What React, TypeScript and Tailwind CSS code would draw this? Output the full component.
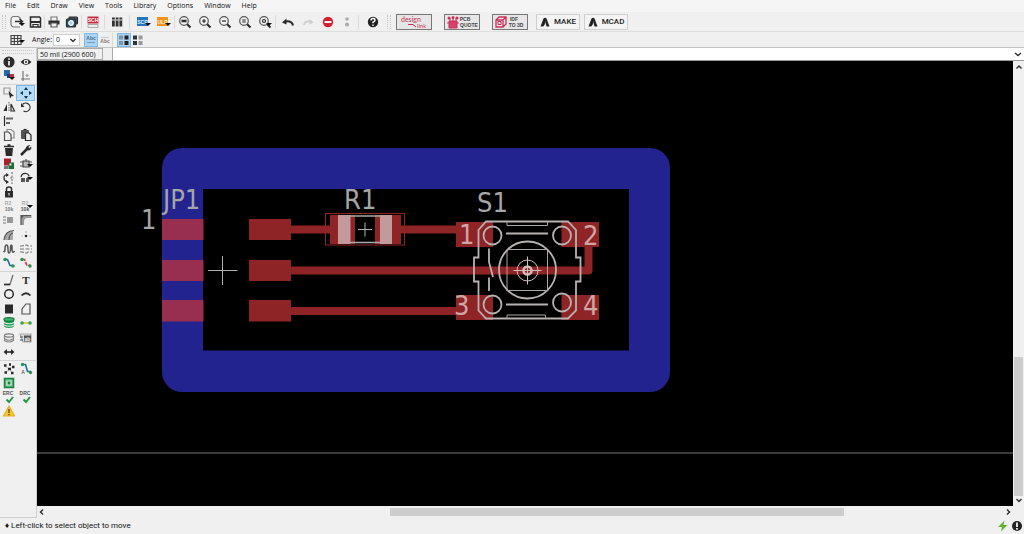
import React from 'react';

type IconProps = { children: React.ReactNode; wide?: boolean };

const DARK = '#2b2b2b';

const Icon = ({ children, wide }: IconProps) => (
    <svg
        viewBox={wide ? '0 0 18 14' : '0 0 14 14'}
        className={wide ? 'w-[18px] h-3.5 shrink-0' : 'size-3.5 shrink-0'}
        fill="none"
        stroke={DARK}
        strokeWidth="1.2"
        aria-hidden="true"
    >
        {children}
    </svg>
);

const Tiny = ({ x, y, fill, size = 5, children }: { x: number; y: number; fill: string; size?: number; children: string }) => (
    <text x={x} y={y} fontSize={size} fontWeight="700" fill={fill} stroke="none" fontFamily="Liberation Sans, sans-serif" textAnchor="middle">
        {children}
    </text>
);

const Caret = ({ x = 12, y = 8 }: { x?: number; y?: number }) => (
    <path d={`M${x - 3} ${y}h6l-3 3z`} fill="#111" stroke="none" />
);

const Lens = ({ children }: { children?: React.ReactNode }) => (
    <Icon>
        <circle cx="6" cy="6" r="4.3" stroke="#555" />
        <path d="M9.2 9.2l3.3 3.3" strokeWidth="2" />
        {children}
    </Icon>
);

/* ---- top toolbar ---- */
const fileTools = [
    { name: 'Open', icon: <Icon wide><path d="M12 4V2.5L10 1.5H5Q3 2 3 4.500v5q.5 2.500 3 2.500h6" stroke="#777" /><path d="M7 6.500h7m-2.500-2.500l3 2.500-3 2.500" strokeWidth="1.500" /><Caret x={14} y={8} /></Icon> },
    { name: 'Save', icon: <Icon><path d="M2.500 2h9l1 1V12h-10z" strokeWidth="1.500" /><path d="M3 7h9" strokeWidth="2" /><path d="M5 12V9.500h5V12" /></Icon> },
];
const printTools = [
    { name: 'Print', icon: <Icon><path d="M4 5.500V2h6v3.500" stroke="#777" /><path d="M1.500 5.500h11v4h-11z" fill={DARK} stroke="none" /><path d="M4 8h6v4H4z" fill="#eee" stroke="#555" /></Icon> },
    { name: 'CAM Processor', icon: <Icon><rect x="4" y="2" width="8.500" height="7" rx="1" fill="#456" /><rect x="1.500" y="4" width="9" height="8" rx="1" fill="#26536e" /><circle cx="6" cy="8" r="2.300" fill="#9fd0ea" stroke="#fff" /></Icon> },
];
const zoomTools = [
    { name: 'Zoom to fit', icon: <Lens><path d="M3.500 6h5" strokeWidth="2.500" /></Lens> },
    { name: 'Zoom in', icon: <Lens><path d="M4 6h4M6 4v4" /></Lens> },
    { name: 'Zoom out', icon: <Lens><path d="M4 6h4" /></Lens> },
    { name: 'Redraw', icon: <Lens><path d="M4.200 5h3.600M4.200 7h3.600" /></Lens> },
    { name: 'Zoom select', icon: <Lens><circle cx="6" cy="6" r="1.500" /><Caret x={11} y={8} /></Lens> },
];
const editTools = [
    { name: 'Undo', icon: <Icon><path d="M12 10.500Q11 5.500 4 6.500" strokeWidth="2" /><path d="M1 7.500l4.500-4v6z" fill={DARK} stroke="none" /></Icon> },
    { name: 'Redo', icon: <Icon><path d="M3 10q1-4.500 6-3.500" stroke="#ccc" strokeWidth="1.600" /><path d="M12.500 7.500L8.500 4v5.500z" fill="#ccc" stroke="none" /></Icon> },
    { name: 'Stop', icon: <Icon><circle cx="7" cy="7" r="5.200" fill="#d3202f" stroke="none" /><path d="M3.500 7h7" stroke="#fff" strokeWidth="2" /></Icon> },
    { name: 'Go', icon: <Icon><circle cx="6" cy="4" r="1.800" fill="#aaa" stroke="none" /><circle cx="6" cy="9.500" r="2" fill="#aaa" stroke="none" /></Icon> },
];

/* ---- left tool palette ---- */
const viewPalette = [
    { name: 'Info', icon: <Icon><circle cx="7" cy="7" r="5" fill={DARK} /><path d="M7 6v4.500M7 3.200v1.600" stroke="#fff" strokeWidth="1.600" /></Icon> },
    { name: 'Show', icon: <Icon><path d="M1.500 7Q7 1 12.500 7 7 13 1.500 7z" fill={DARK} stroke="none" /><circle cx="7" cy="7" r="2.300" fill="#eee" stroke="none" /><circle cx="7" cy="7" r="1" fill={DARK} stroke="none" /></Icon> },
    { name: 'Layers', icon: <Icon><path d="M2 1h6v6H2z" fill="#2c69a8" stroke="none" /><path d="M7 5h5v4H7z" fill="#c52d3c" stroke="none" /><path d="M5 5h3v4H5z" fill="#17406e" stroke="none" /><Caret x={10} y={8} /></Icon> },
    { name: 'Mark', icon: <Icon><path d="M4 2v10M2 10h9" stroke="#777" /><path d="M8 5v3M6.500 6.500h3" stroke="#999" /></Icon> },
];
const editPalette = [
    { name: 'Group', icon: <Icon><path d="M2 2h6v6H2z" stroke="#999" /><path d="M6.500 5l5.500 5-2.500.3L8 12.500z" fill={DARK} stroke="none" /></Icon> },
    { name: 'Move', active: true, icon: <Icon><path d="M7 1l2 3H5zM7 13l2-3H5zM1 7l3-2v4zM13 7l-3-2v4z" fill="#16344f" stroke="none" /></Icon> },
    { name: 'Mirror', icon: <Icon><path d="M1.500 11L5 4v7z" fill={DARK} stroke="none" /><path d="M12.500 11L9 4v7z" /><path d="M7 2v10" strokeDasharray="1.500 1" stroke="#777" /></Icon> },
    { name: 'Rotate', icon: <Icon><path d="M3.500 4.500a4.300 4.300 0 1 1 1 6.500" /><path d="M2 3v4h3.500z" fill={DARK} stroke="none" /></Icon> },
    { name: 'Align', icon: <Icon><path d="M2.500 2v10" /><path d="M4 4.500h7M4 9h4" strokeWidth="2" stroke="#666" /></Icon> },
    null,
    { name: 'Copy', icon: <Icon><path d="M5 1.500h4L12 4v6H5z" stroke="#888" /><path d="M2.500 4h4L9 6.500v6H2.500z" fill="#f0f0f0" stroke="#555" /></Icon> },
    { name: 'Paste', icon: <Icon><rect x="2" y="2" width="8" height="9" rx="1" fill="#555" stroke="none" /><path d="M4.500 1.500h3" /><path d="M6.500 5H10l2 2v5.500H6.500z" fill="#eee" /></Icon> },
    { name: 'Delete', icon: <Icon><path d="M3 5h8l-.8 8H3.800z" fill={DARK} stroke="none" /><path d="M2 3.500h10M5.500 2h3" strokeWidth="1.500" /></Icon> },
    { name: 'Change', icon: <Icon><path d="M2 12l6-6" strokeWidth="2.500" /><path d="M11.500 2L9.500 4l.7 1.200 2-1.700Q13 7 9.500 7.500 6 7.500 7 4.500 8 2 11.500 2z" fill={DARK} stroke="none" /></Icon> },
    { name: 'Paint layers', icon: <Icon><path d="M2 1.500h7v7H2z" fill="#a9202c" stroke="none" /><path d="M6.500 5.500H12V12H6.500z" fill="#1d6b38" stroke="none" /><path d="M7.500 6.500h2v2h-2z" fill="#eee" stroke="none" /><path d="M2 9h4v3H2z" fill="#777" stroke="none" /></Icon> },
    { name: 'Add', icon: <Icon><path d="M4 4h6v6H4z" fill="#bbb" stroke="#444" /><path d="M1 5h3M1 9h3M10 5h3M7 2v3" stroke="#555" /><Caret x={11} y={7} /></Icon> },
    { name: 'Pin swap', icon: <Icon><path d="M6 4H4Q2 4 2 7t3 4" /><path d="M4 2l3 2-3 2zM4 9l3 2-3 2z" fill={DARK} stroke="none" /><path d="M10 1v12M8 7h4" strokeDasharray="2 1.500" stroke="#777" /></Icon> },
    { name: 'Replace', icon: <Icon><path d="M2 6Q3 2 7 2.500q3 .5 3 3" /><path d="M2 7h4v4H2zM7 7h3v4H7z" fill="#555" stroke="none" /><Caret x={11} y={6} /></Icon> },
    { name: 'Lock', icon: <Icon><path d="M4.500 6V4q0-2 2.500-2t2.500 2v2" strokeWidth="1.500" /><path d="M3 6h8v6.500H3z" fill={DARK} stroke="none" /><path d="M7 8v2.500" stroke="#ddd" /></Icon> },
    null,
    { name: 'Name', icon: <Icon><Tiny x={6} y={6} fill="#aaa">R2</Tiny><Tiny x={7} y={12} fill="#777">10k</Tiny></Icon> },
    { name: 'Value', icon: <Icon><Tiny x={6} y={6} fill="#aaa">R2</Tiny><Tiny x={6} y={12} fill="#555">10k</Tiny><Caret x={11} y={6} /></Icon> },
    { name: 'Smash', icon: <Icon><path d="M5 4h6v6H5z" fill="#999" stroke="none" /><path d="M1 4h3M1 7h3M1 10h3" stroke="#777" /></Icon> },
    { name: 'Miter', icon: <Icon><path d="M3.500 12V8.500q0-5 5-5h4" stroke="#999" strokeWidth="3" /><path d="M2 12V2.500h10" stroke="#555" /><path d="M2 2v4l4-4z" fill="#555" stroke="none" /></Icon> },
    { name: 'Split', icon: <Icon><path d="M3 12V8q0-5 8-5v9z" fill="#aaa" stroke="none" /><path d="M2 12q1-9 10-9.500M7 12q0-6 4-7" stroke="#555" /></Icon> },
    { name: 'Optimize', icon: <Icon><circle cx="7" cy="8" r="1.300" fill={DARK} stroke="none" /><path d="M2 8h2M10 8h2M7 3v2" stroke="#bbb" /></Icon> },
    { name: 'Meander', icon: <Icon><path d="M1.500 9Q3 11 3 7t1.500-4T6 7t1 4 1.500-3V5Q9 1.500 10 4v4q1 4 2.500 1" stroke="#555" strokeWidth="1.500" /></Icon> },
    { name: 'Differential pair', icon: <Icon><path d="M1 4h3l1-1h3l1 1h4M1 10h3l1 1h3l1-1h4M1 7h12" strokeDasharray="4 1.500" stroke="#777" /></Icon> },
    { name: 'Route', icon: <Icon><path d="M3 3.500h2.500L8 9.500h3" stroke="#286aa4" strokeWidth="1.700" /><circle cx="3" cy="3.500" r="1.700" fill="#1f934c" stroke="none" /><circle cx="11" cy="10" r="1.700" fill="#1f934c" stroke="none" /></Icon> },
    { name: 'Ripup', icon: <Icon><path d="M3 3.500h2.500L8 9.500h3" stroke="#d8394b" strokeWidth="1.700" strokeDasharray="4 1" /><circle cx="3" cy="3.500" r="1.700" fill="#1f934c" stroke="none" /><circle cx="11" cy="10" r="1.700" fill="#1f934c" stroke="none" /></Icon> },
];
const drawPalette = [
    { name: 'Line', icon: <Icon><path d="M2 11.500h6L11 2" stroke="#666" /><path d="M2 11.500h6" strokeWidth="1.700" /></Icon> },
    { name: 'Text', icon: <Icon><text x="7" y="11" fontSize="11" fill={DARK} stroke="none" textAnchor="middle" fontFamily="Liberation Serif, serif" fontWeight="700">T</text></Icon> },
    { name: 'Circle', icon: <Icon><circle cx="7" cy="7" r="4.300" strokeWidth="1.500" /></Icon> },
    { name: 'Arc', icon: <Icon><path d="M2.500 8.500Q7 4 11.500 8.500" strokeWidth="1.700" /></Icon> },
    { name: 'Rectangle', icon: <Icon><path d="M3 2.500h8v9H3z" fill={DARK} stroke="none" /></Icon> },
    { name: 'Polygon', icon: <Icon><path d="M3 12V7l4-5h4v10z" stroke="#555" /></Icon> },
    { name: 'Via', icon: <Icon><path d="M2 3.500v7q5 3 10 0v-7z" fill="#229d51" stroke="none" /><ellipse cx="7" cy="3.500" rx="5" ry="1.800" fill="#3cb66a" stroke="#167a3a" /><path d="M2 6.500q5 2.500 10 0M2 9q5 2.500 10 0" stroke="#dff3e5" /></Icon> },
    { name: 'Signal', icon: <Icon><path d="M3 7h8" stroke="#d6c22e" strokeWidth="1.500" /><circle cx="3" cy="7" r="1.800" fill="#35a255" stroke="none" /><circle cx="11" cy="7" r="1.800" fill="#35a255" stroke="none" /></Icon> },
    { name: 'Hole', icon: <Icon><ellipse cx="7" cy="4.500" rx="4.500" ry="1.600" stroke="#777" /><path d="M2.500 4.500v5q4.500 3 9 0v-5M3 8q4 2.500 8 0" stroke="#888" /></Icon> },
    { name: 'Attribute', icon: <Icon><path d="M1 3h11v8H4z" fill="#ddd" stroke="#aaa" /><path d="M5 4.500h7v6H5z" fill="#555" stroke="none" /><Tiny x={8.5} y={9.5} fill="#fff">ab</Tiny><path d="M1 6h3M1 9h3" stroke="#555" /></Icon> },
    { name: 'Dimension', icon: <Icon><path d="M3 7h8" strokeWidth="1.600" /><path d="M1.500 7l3.500-3v6zM12.500 7L9 4v6z" fill={DARK} stroke="none" /></Icon> },
    null,
];
const checkPalette = [
    { name: 'Ratsnest', icon: <Icon><path d="M3 4l4 3 4-2M7 7l-3 4M7 7l3 4" stroke="#aaa" strokeWidth=".7" /><path d="M2 3.500h2.500M6 7h3M10 5h2.500M2.500 10.500H5M9 11h2.500M7 2.500h2" strokeWidth="2.300" /></Icon> },
    { name: 'Autorouter', icon: <Icon><path d="M4 2.500h2.500l2 7H12" stroke="#2577a0" strokeWidth="1.700" /><circle cx="3.500" cy="2.500" r="1.700" fill="#26954e" stroke="none" /><circle cx="11.500" cy="10.500" r="1.700" fill="#26954e" stroke="none" /><Tiny x={4} y={12} fill="#666">A</Tiny></Icon> },
    { name: 'Pour', icon: <Icon><path d="M2.500 2.500h9v9h-9z" fill="#63bb82" stroke="#17813d" strokeWidth="1.500" /><path d="M5 5h4v4H5z" fill="#17813d" stroke="#d6eedc" /></Icon> },
    null,
    { name: 'ERC', icon: <Icon><Tiny x={6} y={5} fill="#555">ERC</Tiny><path d="M4.500 9.500l2.500 2.500 4-5" stroke="#259447" strokeWidth="2" /></Icon> },
    { name: 'DRC', icon: <Icon><Tiny x={6} y={5} fill="#555">DRC</Tiny><path d="M4.500 9.500l2.500 2.500 4-5" stroke="#259447" strokeWidth="2" /></Icon> },
    { name: 'Errors', icon: <Icon><path d="M7 2l5.500 10h-11z" fill="#f9c32c" stroke="#eab11d" strokeLinejoin="round" /><path d="M7 5v4M7 10v1.300" stroke="#4b3a11" /></Icon> },
    null,
];

type Tool = { name: string; icon: React.ReactNode; active?: boolean } | null;

const Palette = ({ tools, className }: { tools: Tool[]; className: string }) => (
    <div className={`grid grid-cols-2 content-between pr-0.5 ${className}`}>
        {tools.map((tool, i) =>
            tool ? (
                <button
                    key={tool.name}
                    aria-label={tool.name}
                    className={`h-3.5 flex items-center justify-center ${tool.active ? 'bg-[#b7dcf7] outline outline-[#7db8e6]' : ''}`}
                >
                    {tool.icon}
                </button>
            ) : (
                <span key={i} className="h-3.5" />
            )
        )}
    </div>
);

const ToolGroup = ({ tools, className }: { tools: Tool[]; className: string }) => (
    <div className={`flex items-center ${className}`}>
        {tools.map((tool) => tool && (
            <button key={tool.name} aria-label={tool.name} className="flex-1 flex items-center justify-center">
                {tool.icon}
            </button>
        ))}
    </div>
);

const Separator = () => <span className="w-px h-3.5 bg-[#dcdcdc] shrink-0" />;
const Grip = () => <span className="h-3.5 w-1 shrink-0 border-x border-dotted border-[#c4c4c4]" />;

const Chevron = ({ d }: { d: string }) => (
    <svg viewBox="0 0 8 8" className="size-2 shrink-0" fill="none" stroke="#333" strokeWidth="1.5" aria-hidden="true">
        <path d={d} />
    </svg>
);

const Autodesk = () => (
    <svg viewBox="0 0 10 10" className="size-2.5" aria-hidden="true">
        <path d="M.5 9.500L3.500 1.500Q5 0 6.500 1.500L9.500 9.500H6.500L5 4Q5.500 8 3 9.500z" fill="#222" />
    </svg>
);

const menus = ['File', 'Edit', 'Draw', 'View', 'Tools', 'Library', 'Options', 'Window', 'Help'];

const TopToolbar = () => (
    <div className="h-5 pl-0.5 flex items-center border-b border-[#dedede] overflow-hidden">
        <Grip />
        <ToolGroup tools={fileTools} className="w-9 ml-0.5" />
        <Separator />
        <ToolGroup tools={printTools} className="w-9" />
        <Separator />
        <ToolGroup
            className="w-[22px]"
            tools={[{ name: 'Schematic', icon: <Icon><path d="M1.500 1.500h11v7h-11z" fill="#c72d40" stroke="none" /><Tiny x={7} y={7} fill="#fff">SCH</Tiny><path d="M2 9.500h10v3H2z" fill="#eee" stroke="#999" strokeWidth=".8" /></Icon> }]}
        />
        <Separator />
        <ToolGroup
            className="w-6"
            tools={[{ name: 'Library', icon: <Icon><path d="M2 2.500h2.800v9H2zM5.700 2.500h2.800v9H5.700zM9.400 2.500h2.800v9H9.400z" fill="#333" stroke="none" /><path d="M2 5h10.200" stroke="#ccc" /></Icon> }]}
        />
        <Separator />
        <ToolGroup
            className="w-10 ml-1"
            tools={[
                { name: 'Script', icon: <Icon wide><path d="M2 2h11v9H2z" fill="#2675bd" stroke="none" /><Tiny x={7.5} y={8.5} fill="#dcecff">SCR</Tiny><Caret x={13} y={8} /></Icon> },
                { name: 'ULP', icon: <Icon wide><path d="M2 2h11v9H2z" fill="#f3921e" stroke="none" /><Tiny x={7.5} y={8.5} fill="#fff0d6">ULP</Tiny><Caret x={13} y={8} /></Icon> },
            ]}
        />
        <Separator />
        <ToolGroup tools={zoomTools} className="w-25" />
        <Separator />
        <ToolGroup tools={editTools} className="w-20 ml-0.5" />
        <Separator />
        <ToolGroup
            className="w-7"
            tools={[{ name: 'Help', icon: <Icon><circle cx="7" cy="7" r="5.200" fill="#222" stroke="none" /><path d="M5 5.500q0-2 2-2t2 1.700Q9 6.500 7 7.200v1.100M7 9.500v1.400" stroke="#fff" strokeWidth="1.400" /></Icon> }]}
        />
        <Grip />
        <div className="ml-[5px] flex items-center gap-3">
            <button aria-label="design link" className="w-9 h-4 border border-[#777] bg-[#e6e6e6]">
                <svg viewBox="0 0 34 14" className="w-full h-full" aria-hidden="true">
                    <text x="4" y="7" fontSize="7" fill="#c9305a" fontFamily="Lato, sans-serif">design</text>
                    <text x="20" y="13" fontSize="6" fill="#c9305a" fontFamily="Lato, sans-serif">link</text>
                    <path d="M11 9.500h5l3 2.500" stroke="#c9305a" fill="none" />
                </svg>
            </button>
            <button aria-label="PCB quote" className="w-9 h-4 border border-[#777] bg-[#e6e6e6]">
                <svg viewBox="0 0 34 14" className="w-full h-full" aria-hidden="true">
                    <path d="M4 6h8v7H4zM5 6V3M8 6V2M11 6V3M2 8h2M12 8h2" fill="#d4416a" stroke="#c9305a" />
                    <circle cx="4" cy="3" r="1.500" fill="#c9305a" />
                    <circle cx="8" cy="2.500" r="1.500" fill="#c9305a" />
                    <circle cx="12" cy="3" r="1.500" fill="#c9305a" />
                    <Tiny x={20} y={6} fill="#444">PCB</Tiny>
                    <Tiny x={24} y={12} fill="#444">QUOTE</Tiny>
                </svg>
            </button>
            <button aria-label="IDF to 3D" className="w-9 h-4 border border-[#777] bg-[#e6e6e6]">
                <svg viewBox="0 0 34 14" className="w-full h-full" aria-hidden="true">
                    <path d="M3 5l3-3h7v7l-3 3H3zM3 5h7v7M10 5l3-3" fill="none" stroke="#c9305a" strokeWidth="1.300" />
                    <path d="M5 6.500h3v3H5z" fill="none" stroke="#c9305a" />
                    <Tiny x={21} y={6} fill="#444">IDF</Tiny>
                    <Tiny x={23} y={12} fill="#444">TO 3D</Tiny>
                </svg>
            </button>
        </div>
        <div className="ml-2 flex items-center gap-1 font-['Roboto',sans-serif] text-[8px] leading-3 font-medium text-[#222]">
            <button className="w-11 h-4 flex items-center justify-center gap-1 border border-[#cfcfcf] bg-[#f4f4f4]"><Autodesk />MAKE</button>
            <button className="w-11 h-4 flex items-center justify-center gap-1 border border-[#cfcfcf] bg-[#f4f4f4]"><Autodesk />MCAD</button>
        </div>
    </div>
);

const ParameterBar = () => (
    <div className="h-4 pl-2 flex items-center bg-[#f0f0f0] border-b border-[#c3c3c3]">
        <button aria-label="Grid" className="mr-1.5">
            <Icon wide>
                <path d="M3 2.500h10v9H3zM6.300 2.500v9M9.700 2.500v9M3 5.500h10M3 8.500h10" stroke="#444" />
                <Caret x={14} y={7} />
            </Icon>
        </button>
        <label htmlFor="angle" className="mr-px">Angle:</label>
        <div className="flex items-center w-[27px] h-3 pr-0.5 bg-white border border-[#cfcfcf]">
            <select id="angle" className="flex-1 min-w-0 pl-0.5 appearance-none bg-transparent" defaultValue="0">
                <option>0</option>
                <option>90</option>
                <option>180</option>
                <option>270</option>
            </select>
            <Chevron d="M1.5 3l2.500 2.500L6.500 3" />
        </div>
        <button aria-label="Normal text" className="ml-1 h-3.5 bg-[#a9d4f5] outline-1 -outline-offset-1 outline-[#7db8e6]">
            <Icon><Tiny x={7} y={7} fill="#4a6e8c">Abc</Tiny><path d="M3 9.500h8" stroke="#7ba0bd" /></Icon>
        </button>
        <button aria-label="Mirrored text">
            <Icon><path d="M3 4.500h8" stroke="#ccc" /><Tiny x={7} y={10} fill="#887070">Abc</Tiny></Icon>
        </button>
        <Separator />
        <button aria-label="Top side" className="ml-1 h-3.5 bg-[#a9d4f5] outline-1 -outline-offset-1 outline-[#7db8e6]">
            <Icon><path d="M2 2.500h4v4H2zM2 8h4v4H2z" fill="#8192a0" stroke="none" /><path d="M7.500 2.500h4v4h-4zM7.500 8h4v4h-4z" fill="#222" stroke="none" /></Icon>
        </button>
        <button aria-label="Bottom side">
            <Icon><path d="M2 2.500h4v4H2zM2 8h4v4H2z" fill="#333" stroke="none" /><path d="M7.500 2.500h4v4h-4zM7.500 8h4v4h-4z" fill="#999" stroke="none" /></Icon>
        </button>
    </div>
);

const Board = () => (
    <svg viewBox="37 61 976 445" preserveAspectRatio="xMinYMin slice" className="block w-full h-full bg-black" role="img" aria-label="Board layout">
        {/* board outline */}
        <path fillRule="evenodd" fill="#22238e" d="M182 148H650a20 20 0 0 1 20 20V372a20 20 0 0 1-20 20H182a20 20 0 0 1-20-20V168a20 20 0 0 1 20-20zM203 189V350.500H629V189z" />
        <path d="M37 453H1013" stroke="#777" />

        {/* connector pads */}
        <g fill="#982f50">
            <rect x="162" y="219" width="41.500" height="21" />
            <rect x="162" y="260" width="41.500" height="21" />
            <rect x="162" y="300" width="41.500" height="21.500" />
        </g>
        <g fill="#8f2426">
            <rect x="249" y="219" width="42" height="21" />
            <rect x="249" y="260" width="42" height="21" />
            <rect x="249" y="300" width="42" height="21.500" />
            <rect x="330" y="215" width="25" height="29" />
            <rect x="375" y="215" width="26" height="29" />
            <rect x="456" y="222" width="37" height="25" />
            <rect x="561.500" y="222" width="37.500" height="25" />
            <rect x="456" y="295" width="37" height="25" />
            <rect x="561.500" y="295" width="37.500" height="25" />
        </g>
        {/* traces */}
        <g stroke="#8f2426" strokeWidth="8" fill="none" strokeLinejoin="round">
            <path d="M291 229.500H330M401 229.500H456M291 311H456M291 270.500H588.500V247" />
        </g>

        {/* R1 */}
        <rect x="325.500" y="213.500" width="79" height="31.500" fill="none" stroke="#8f2426" />
        <g fill="#c29a9c">
            <rect x="338" y="215" width="12.500" height="29" />
            <rect x="380" y="215" width="12" height="29" />
        </g>
        <path d="M350 216H380M350 242.500H380" stroke="#a8aaa8" strokeWidth="1.500" />
        <path d="M358 229.500h14M365 222.500v14" stroke="#b4b8a8" />

        {/* origin mark */}
        <path d="M208 270.500h29.500M222.500 256v29" stroke="#b0b0b0" />

        {/* S1 */}
        <g fill="none" stroke="#b8b2b2" strokeWidth="1.800">
            <path d="M486 221.500H568L576 230V257.500H580.500V281.500H576V310.500L568 318.500H486L478.500 310.500V281.500H474V257.500H478.500V230z" />
            <circle cx="492.500" cy="235.500" r="9" />
            <circle cx="562" cy="235.500" r="9" />
            <circle cx="492.500" cy="304.500" r="9" />
            <circle cx="562" cy="302.500" r="9" />
            <circle cx="527.500" cy="270" r="28.500" />
            <path d="M506 233.500H548M506 304.500H548M489 248.500V262L493 277M489 277.500V291" />
        </g>
        <g fill="none" stroke="#aaa4a4">
            <path d="M507 221.500V225.500H547.500V221.500M507 318.500V315H545.500V318.500" />
            <rect x="507" y="249.500" width="40.500" height="41" />
        </g>
        <g fill="none" stroke="#d2bcbc">
            <circle cx="527.500" cy="270.500" r="10.500" />
            <circle cx="527.500" cy="270.500" r="4" strokeWidth="2.500" />
            <path d="M513.500 270.500h28M527.500 256.500v28" />
        </g>

        <g fontFamily="DejaVu Sans Condensed, DejaVu Sans, sans-serif" fontSize="27" fill="#a6a6a8">
            <text x="163" y="209">JP1</text>
            <text x="344" y="209">R1</text>
            <text x="477" y="212">S1</text>
            <text x="141" y="229">1</text>
        </g>
        <g fontFamily="DejaVu Sans Condensed, DejaVu Sans, sans-serif" fontSize="27" fill="#d0a5a6">
            <text x="459" y="244">1</text>
            <text x="583" y="245">2</text>
            <text x="454" y="315">3</text>
            <text x="583" y="315">4</text>
        </g>
    </svg>
);

const App = () => (
    <div className="h-screen flex flex-col overflow-hidden bg-[#f0f0f0] font-['Open_Sans','Noto_Sans',sans-serif] text-[7px] leading-3 text-[#111]">
        <nav className="h-3 pl-[5px] flex items-center gap-[11px] bg-[#f5f5f5]">
            {menus.map((menu) => (
                <button key={menu}>{menu}</button>
            ))}
        </nav>
        <TopToolbar />
        <ParameterBar />

        <div className="flex-1 min-h-0 flex">
            <aside className="w-[37px] shrink-0 pt-0.5 border-r border-b border-[#cfcfcf]">
                <div className="mx-0.5 h-1 mb-px border-y border-dotted border-[#c8c8c8]" />
                <Palette tools={viewPalette} className="h-7" />
                <hr className="my-px border-[#d4d4d4]" />
                <Palette tools={editPalette} className="h-[184px]" />
                <hr className="my-px border-[#d4d4d4]" />
                <Palette tools={drawPalette} className="h-[86px]" />
                <hr className="my-px border-[#d4d4d4]" />
                <Palette tools={checkPalette} className="h-14" />
            </aside>

            <main className="flex-1 min-w-0 flex flex-col">
                <div className="h-[13px] shrink-0 flex items-center bg-white border-b border-[#999]">
                    <span className="w-[66px] h-full pl-0.5 bg-[#f0f0f0] border border-[#aaa] whitespace-nowrap">50 mil (2900 600)</span>
                    <span className="w-2.5 h-full border-r border-[#aaa] bg-[#f0f0f0]" />
                    <input aria-label="Command line" className="flex-1 min-w-0 h-full px-1 bg-white outline-none" />
                    <button aria-label="Command history" className="px-0.5"><Chevron d="M1 3l3 2.500L7 3" /></button>
                </div>
                <div className="flex-1 min-h-0 flex">
                    <div className="flex-1 min-w-0"><Board /></div>
                    <div className="w-[11px] shrink-0 py-0.5 flex flex-col items-center">
                        <Chevron d="M1.500 5.500L4 3l2.500 2.500" />
                        <div className="grow-[286]" />
                        <div className="grow-[139] w-[9px] bg-[#cdcdcd]" />
                        <Chevron d="M1.500 3L4 5.500 6.500 3" />
                    </div>
                </div>
                <div className="h-3 shrink-0 pl-px pr-3 flex items-center">
                    <Chevron d="M5 1.500L2.500 4 5 6.500" />
                    <div className="grow-[344]" />
                    <div className="grow-[454] h-2 bg-[#cdcdcd]" />
                    <div className="grow-[160]" />
                    <Chevron d="M3 1.500L5.500 4 3 6.500" />
                </div>
            </main>
        </div>

        <footer className="h-4 shrink-0 pl-[5px] flex items-center">
            <span className="flex-1 font-['Roboto',sans-serif] text-[8px] leading-3">♦ Left-click to select object to move</span>
            <Icon><path d="M8.500 1.500L2 8h4l-1 4.500L11.500 6h-4z" fill="#63b32e" stroke="none" /></Icon>
            <Icon><circle cx="7" cy="7" r="5" fill="#222" stroke="none" /><path d="M7 3.500v4.500M7 9v1.700" stroke="#fff" strokeWidth="1.700" /></Icon>
        </footer>
    </div>
);

export default App;
